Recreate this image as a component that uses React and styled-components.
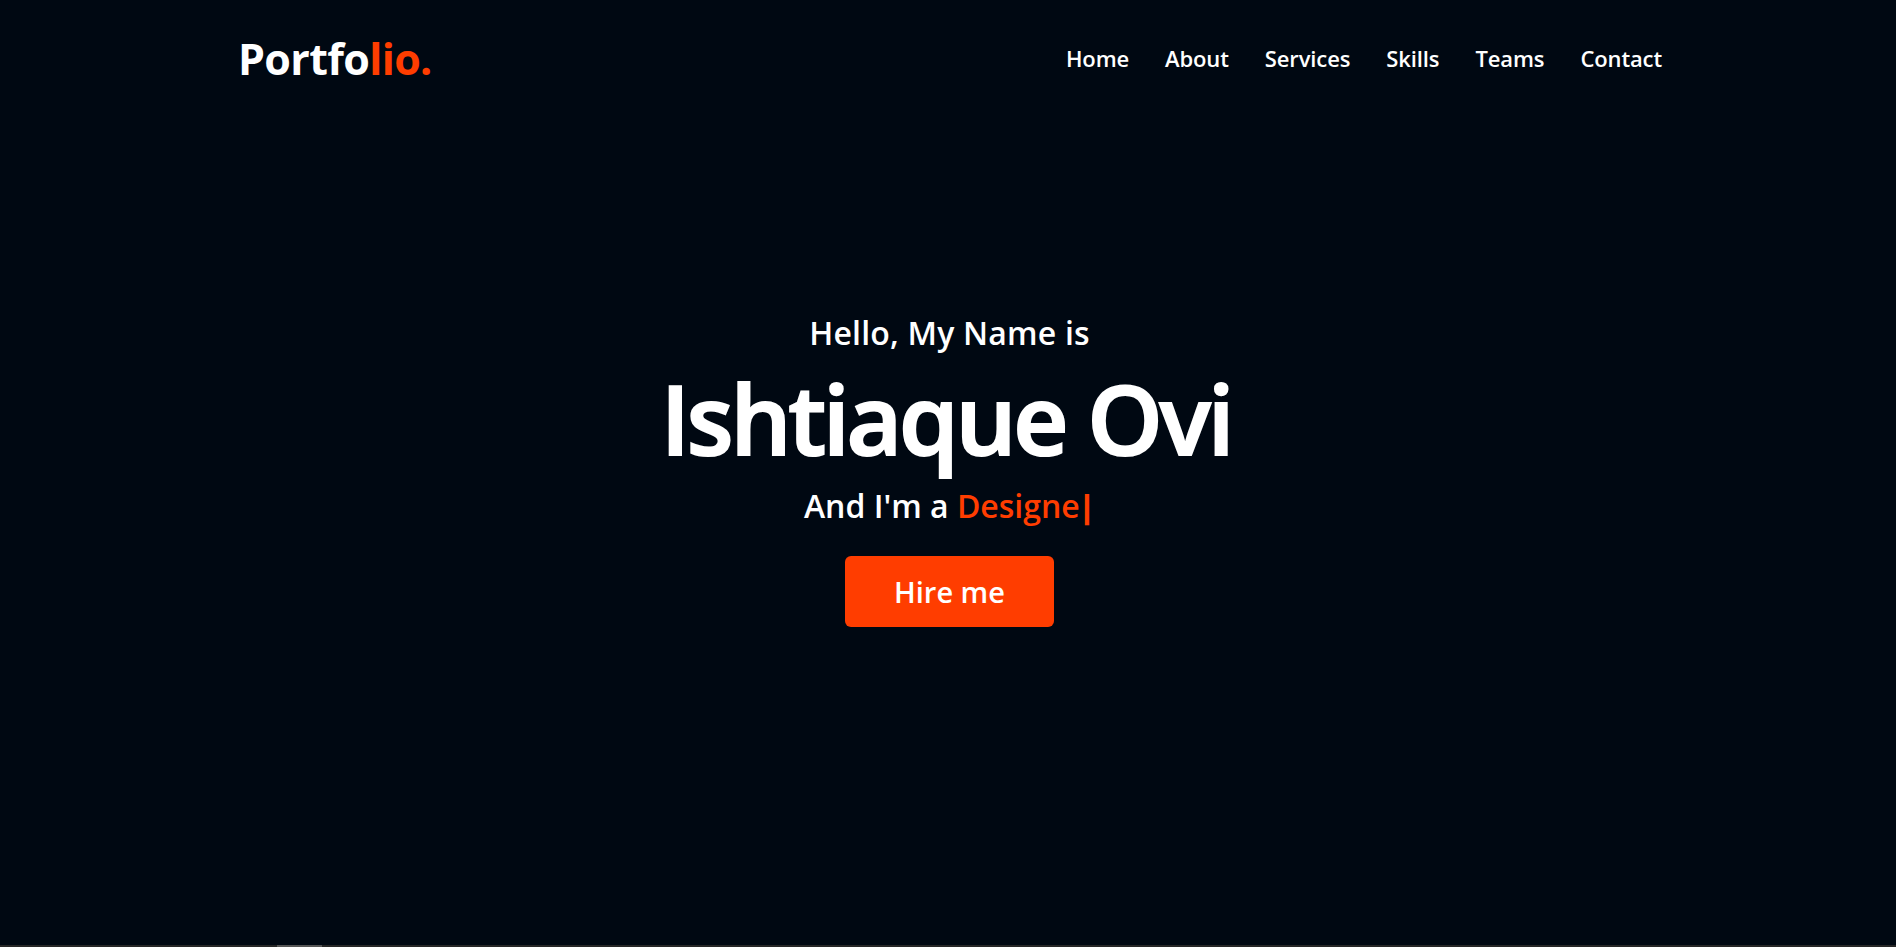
import React from "react";
import styled, { createGlobalStyle } from "styled-components";

const Global = createGlobalStyle`
  html, body { margin: 0; padding: 0; background: #000812; height: 100%; overflow: hidden; }
  #root { height: 100%; }
  * { box-sizing: border-box; }
`;

const Page = styled.div`
  position: relative;
  height: 947px;
  background: #000812;
  color: #fff;
  font-family: "Open Sans", "Noto Sans", sans-serif;
  font-weight: 600;
`;

const Navbar = styled.nav`
  height: 116px;
  padding: 0 234px 0 238px;
  display: flex;
  align-items: center;
  justify-content: space-between;
`;

const Logo = styled.a`
  font-size: 43px;
  font-weight: 700;
  letter-spacing: -0.65px;
  color: #fff;
`;

const Accent = styled.span`
  color: #ff3d00;
`;

const Caret = styled.span`
  font-weight: 800;
  margin-left: -1px;
`;

const Menu = styled.ul`
  list-style: none;
  margin: 0;
  padding: 0;
  display: flex;
  gap: 36px;
`;

const MenuLink = styled.a`
  font-size: 22px;
  font-weight: 600;
  letter-spacing: -0.12px;
  color: #fff;
`;

const Hero = styled.section`
  display: flex;
  flex-direction: column;
  align-items: center;
  padding: 195px 0 0 3px;
`;

const Greeting = styled.div`
  font-size: 32px;
  line-height: 44px;
  letter-spacing: 0.2px;
`;

const Name = styled.h1`
  margin: 2px 0 0 -7px;
  font-size: 96px;
  line-height: 122px;
  font-weight: 600;
  letter-spacing: -3.2px;
  -webkit-text-stroke: 2px #fff;
`;

const Role = styled.div`
  font-size: 32px;
  line-height: 44px;
  margin-top: 5px;
`;

const HireButton = styled.a`
  margin-top: 28px;
  width: 209px;
  height: 71px;
  display: flex;
  align-items: center;
  justify-content: center;
  background: #ff3d00;
  border-radius: 6px;
  font-size: 29px;
  color: #fff;
`;

const ScrollTrack = styled.div`
  position: absolute;
  left: 0;
  right: 0;
  bottom: 0;
  height: 2px;
  background: #262626;
`;

const ScrollThumb = styled.div`
  position: absolute;
  left: 277px;
  width: 45px;
  top: 0;
  bottom: 0;
  background: #555;
`;

export default function App() {
  return (
    <Page>
      <Global />
      <Navbar>
        <Logo>Portfo<Accent>lio.</Accent></Logo>
        <Menu>
          {["Home", "About", "Services", "Skills", "Teams", "Contact"].map((t) => (
            <li key={t}><MenuLink>{t}</MenuLink></li>
          ))}
        </Menu>
      </Navbar>
      <Hero>
        <Greeting>Hello, My Name is</Greeting>
        <Name>Ishtiaque Ovi</Name>
        <Role>And I'm a <Accent>Designe<Caret>|</Caret></Accent></Role>
        <HireButton>Hire me</HireButton>
      </Hero>
      <ScrollTrack><ScrollThumb /></ScrollTrack>
    </Page>
  );
}
